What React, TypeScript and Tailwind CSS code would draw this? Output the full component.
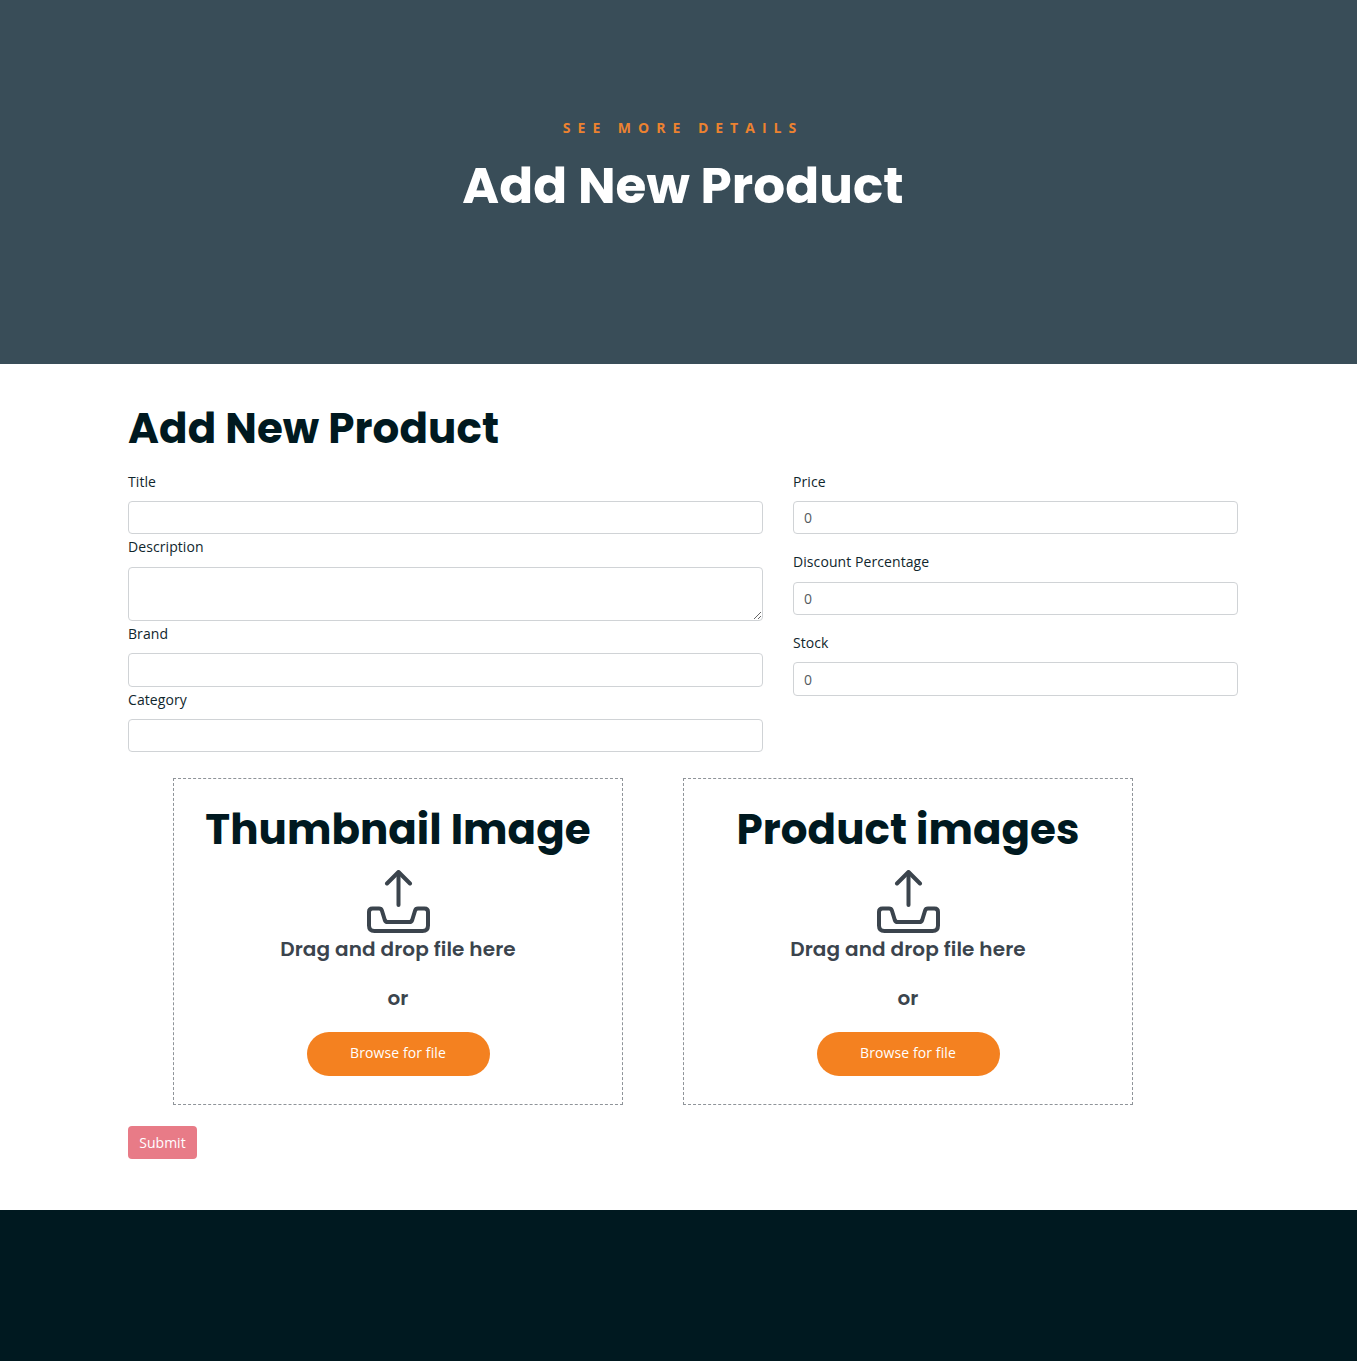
const display = "font-[Poppins,Inter,sans-serif]";

function UploadIcon() {
  return (
    <svg
      width="64"
      height="64"
      viewBox="0 0 64 64"
      fill="none"
      stroke="#3b444d"
      strokeWidth="4"
      strokeLinecap="round"
      strokeLinejoin="round"
      className="block"
    >
      <path d="M32.500 35V3" />
      <path d="M21 13.500L32.500 2L44 13.500" />
      <path d="M6.500 38.500H13Q15.300 38.500 15.900 40.500L18.800 50Q19.500 52 21.500 52H43.500Q45.500 52 46.200 50L49.100 40.500Q49.700 38.500 52 38.500H58.500Q62 38.500 62 42V55.500Q62 61 56.500 61H8.500Q3 61 3 55.500V42Q3 38.500 6.500 38.500Z" />
    </svg>
  );
}

type FieldProps = {
  label: string;
  value?: string;
  labelClass?: string;
  inputClass?: string;
  className?: string;
};

const labelBase =
  "block text-sm leading-[22px] tracking-[0.08px] text-[#10262d]";

function Field({
  label,
  value,
  labelClass = "h-[30px]",
  inputClass = "h-[33px]",
  className = "",
}: FieldProps) {
  return (
    <div className={className}>
      <label className={`${labelBase} ${labelClass}`}>{label}</label>
      <input
        defaultValue={value}
        className={`block w-full rounded-[4px] border border-[#d0d3d6] bg-white px-2.5 text-sm text-[#555b61] outline-none ${inputClass}`}
      />
    </div>
  );
}

function DropZone({ title }: { title: string }) {
  return (
    <div className="flex h-[327px] w-[450px] flex-col items-center border border-dashed border-[#8f9499]">
      <h2
        className={`mt-[26px] h-[50px] text-[42px] leading-[50px] font-bold tracking-[0.04px] whitespace-nowrap text-[#001920] ${display}`}
      >
        {title}
      </h2>
      <div className="mt-[15px]">
        <UploadIcon />
      </div>
      <h3
        className={`h-[30px] text-[20px] leading-[30px] font-semibold tracking-[0.1px] text-[#3b444d] ${display}`}
      >
        Drag and drop file here
      </h3>
      <span
        className={`mt-[19px] h-[30px] text-[20px] leading-[30px] font-semibold text-[#3b444d] ${display}`}
      >
        or
      </span>
      <button className="mt-[19px] h-[44px] w-[183px] rounded-[22px] bg-[#f48120] pb-0.5 text-sm tracking-[0.1px] text-white">
        Browse for file
      </button>
    </div>
  );
}

export default function App() {
  return (
    <div className="min-h-[1361px] bg-white font-['Open_Sans',sans-serif]">
      <header className="flex h-[364px] flex-col items-center bg-[#394d58] pt-[117px]">
        <p className="pl-[9px] text-sm leading-[22px] font-bold tracking-[7px] text-[#ec8230] uppercase">
          See more details
        </p>
        <h1
          className={`mt-[17px] pl-[9px] text-[50px] leading-[60px] font-bold tracking-[0.08px] whitespace-nowrap text-white ${display}`}
        >
          Add New Product
        </h1>
      </header>
      <main className="h-[846px] pl-[128px]">
        <h2
          className={`h-[89px] pt-[40px] text-[42px] leading-[50px] font-bold tracking-[0.08px] text-[#001920] ${display}`}
        >
          Add New Product
        </h2>
        <div className="mt-[18px] flex gap-[30px]">
          <div className="w-[635px]">
            <Field label="Title" />
            <div className="mt-[2px]">
              <label className={`${labelBase} h-[31px]`}>Description</label>
              <textarea className="block h-[54px] w-full resize-y rounded-[4px] border border-[#d0d3d6] bg-white outline-none" />
            </div>
            <Field label="Brand" className="mt-[2px]" inputClass="h-[34px]" />
            <Field label="Category" className="mt-[2px]" />
          </div>
          <div className="w-[445px]">
            <Field label="Price" value="0" />
            <Field
              label="Discount Percentage"
              value="0"
              className="mt-[17px]"
              labelClass="h-[31px]"
            />
            <Field
              label="Stock"
              value="0"
              className="mt-[17px]"
              inputClass="h-[34px]"
            />
          </div>
        </div>
        <div className="mt-[26px] ml-[45px] flex gap-[60px]">
          <DropZone title="Thumbnail Image" />
          <DropZone title="Product images" />
        </div>
        <button className="mt-[21px] block h-[33px] w-[69px] rounded-[4px] bg-[#e87b87] text-sm text-white">
          Submit
        </button>
      </main>
      <footer className="h-[151px] bg-[#001920]" />
    </div>
  );
}
